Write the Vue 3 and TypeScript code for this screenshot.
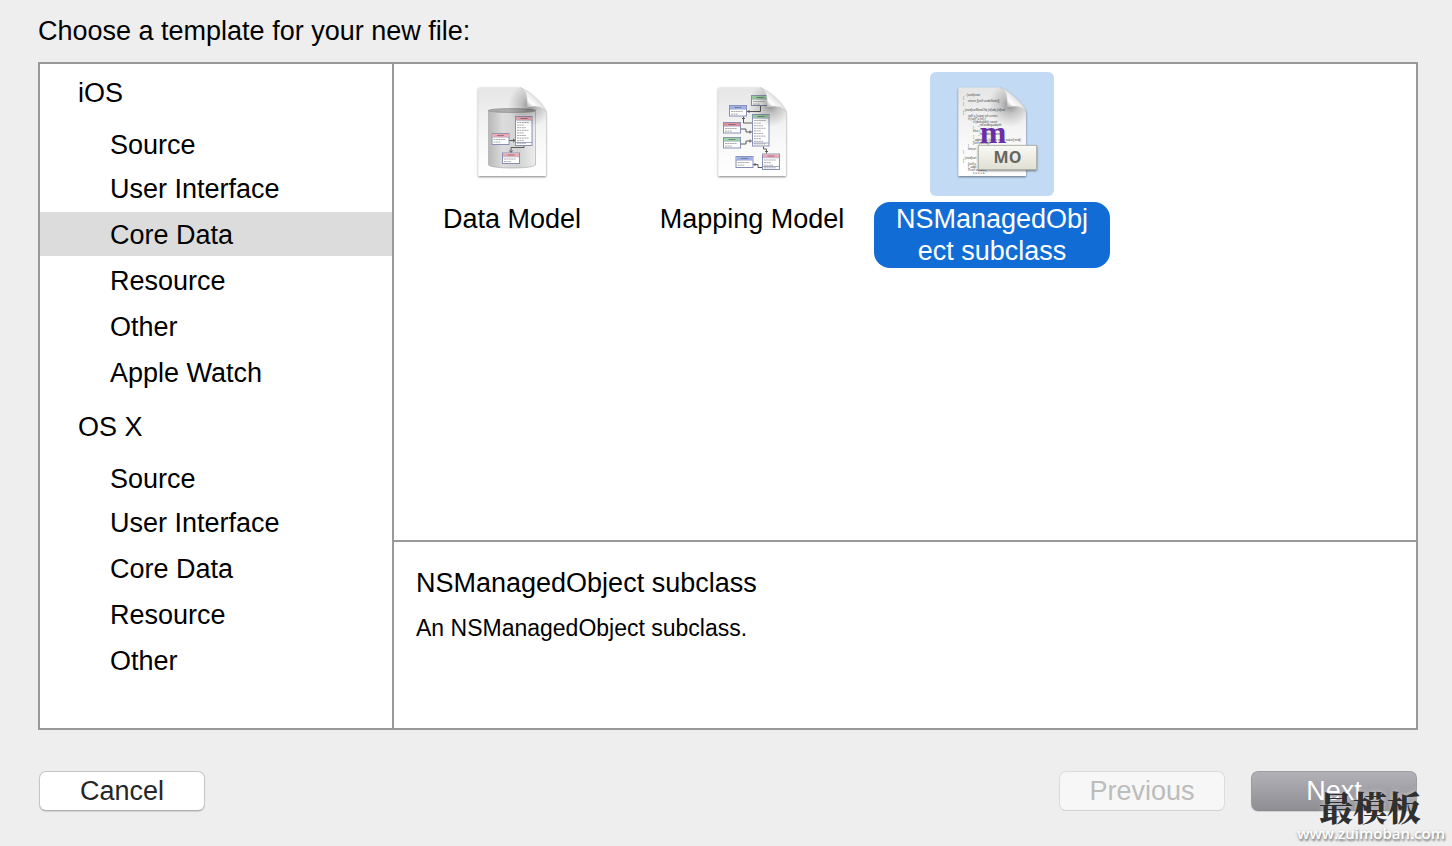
<script setup lang="ts">
import { computed, ref } from 'vue'

interface Group {
  name: string
  items: string[]
}

interface Entity {
  x: number
  y: number
  w: number
  h: number
  color: string
}

interface Template {
  id: string
  name: string
  description: string
  entities: Entity[]
  links: string[]
}

const groups: Group[] = [
  { name: 'iOS', items: ['Source', 'User Interface', 'Core Data', 'Resource', 'Other', 'Apple Watch'] },
  { name: 'OS X', items: ['Source', 'User Interface', 'Core Data', 'Resource', 'Other'] },
]

const pink = '#f0a9b3'
const green = '#9fd3a3'
const blue = '#9fb2ea'
const red = '#dc929c'

const templates: Template[] = [
  {
    id: 'model',
    name: 'Data Model',
    description: 'A Core Data model file.',
    entities: [
      { x: 42, y: 61.5, w: 17, h: 11, color: pink },
      { x: 65.5, y: 44.5, w: 16.5, h: 29, color: pink },
      { x: 52.5, y: 81, w: 17, h: 10.5, color: pink },
    ],
    links: ['M59 68.5H65M63 66.8L65 68.5L63 70.2', 'M74 74V75.5H61V80.5M59.3 78.5L61 80.5L62.7 78.5'],
  },
  {
    id: 'mapping',
    name: 'Mapping Model',
    description: 'A Core Data mapping model file.',
    entities: [
      { x: 61.5, y: 23.5, w: 16, h: 10, color: green },
      { x: 39.5, y: 33.5, w: 17, h: 10.5, color: blue },
      { x: 62.5, y: 42.5, w: 16.5, h: 31.5, color: green },
      { x: 33.5, y: 50.5, w: 17, h: 10.5, color: red },
      { x: 33.5, y: 65.5, w: 17, h: 10.5, color: green },
      { x: 46, y: 84.5, w: 17, h: 11, color: blue },
      { x: 72.5, y: 82, w: 17, h: 15.5, color: pink },
    ],
    links: [
      'M70.5 34V39.5H57M59 38V41',
      'M53.5 44.5V51H62M52 46.5H55',
      'M51 57H56V60H62M60 58.5V61.5',
      'M51 72H56V69H62M60 67.5V70.5',
      'M73.5 74.5V77H76.5V81.5M75 79.5H78',
      'M63 92.5H68V95.5H72M65 91V94',
    ],
  },
  {
    id: 'subclass',
    name: 'NSManagedObject subclass',
    description: 'An NSManagedObject subclass.',
    entities: [],
    links: [],
  },
]

const codeLines = [
  { x: 35, y: 24, text: '- (void)start' },
  { x: 33, y: 27, text: '{' },
  { x: 38, y: 30, text: 'return [[self undoState]];' },
  { x: 33, y: 33, text: '}' },
  { x: 33, y: 39, text: '- (void)setNewObj:(id)obj:(id)val' },
  { x: 33, y: 42, text: '{' },
  { x: 38, y: 45, text: 'self = [super of curves' },
  { x: 38, y: 48, text: 'if (self != nil) {' },
  { x: 43, y: 51, text: 'if (delegate) count;' },
  { x: 48, y: 54, text: '_recording=depth' },
  { x: 43, y: 57, text: '}' },
  { x: 43, y: 60, text: 'else {' },
  { x: 48, y: 63, text: '_recording=point' },
  { x: 43, y: 66, text: '}' },
  { x: 43, y: 69, text: '_address = [super order value] end];' },
  { x: 43, y: 72, text: '[self package' },
  { x: 38, y: 75, text: '}' },
  { x: 38, y: 78, text: 'return' },
  { x: 33, y: 81, text: '}' },
  { x: 33, y: 87, text: '- (void)set' },
  { x: 33, y: 90, text: '{' },
  { x: 38, y: 93, text: '[self a' },
  { x: 38, y: 96, text: '[_addr' },
  { x: 38, y: 99, text: 'if self valued {' },
  { x: 43, y: 102, text: 's = s + a' },
]

const selectedCategory = ref('iOS/Core Data')
const selectedId = ref('subclass')
const selected = computed(() => templates.find((t) => t.id === selectedId.value) ?? templates[0])

function rowCount(e: Entity): number {
  return Math.floor((e.h - 4) / 2.6)
}
</script>

<template>
  <main class="dialog">
    <h1 class="title">Choose a template for your new file:</h1>

    <div class="browser">
      <nav class="sidebar" aria-label="Template categories">
        <section v-for="group in groups" :key="group.name" class="group">
          <h2 class="group-name">{{ group.name }}</h2>
          <ul class="items">
            <li v-for="item in group.items" :key="item">
              <button
                type="button"
                class="item"
                :class="{ active: selectedCategory === group.name + '/' + item }"
                @click="selectedCategory = group.name + '/' + item"
              >{{ item }}</button>
            </li>
          </ul>
        </section>
      </nav>

      <div class="content">
        <div class="templates">
          <button
            v-for="t in templates"
            :key="t.id"
            type="button"
            class="card"
            :class="{ chosen: t.id === selectedId }"
            @click="selectedId = t.id"
          >
            <svg class="icon" viewBox="0 0 124 124" aria-hidden="true">
              <defs>
                <linearGradient :id="t.id + '-page'" x1="0" y1="0" x2="0" y2="1">
                  <stop offset="0" stop-color="#e6e6e6" />
                  <stop offset="0.6" stop-color="#f8f8f8" />
                  <stop offset="1" stop-color="#ffffff" />
                </linearGradient>
                <radialGradient :id="t.id + '-shade'" gradientUnits="userSpaceOnUse" cx="80" cy="33" r="22">
                  <stop offset="0" stop-color="#000" stop-opacity="0.4" />
                  <stop offset="0.4" stop-color="#000" stop-opacity="0.18" />
                  <stop offset="1" stop-color="#000" stop-opacity="0" />
                </radialGradient>
                <linearGradient :id="t.id + '-fold'" gradientUnits="userSpaceOnUse" x1="77" y1="35" x2="86" y2="26">
                  <stop offset="0" stop-color="#a6a6a6" />
                  <stop offset="0.45" stop-color="#ffffff" />
                  <stop offset="1" stop-color="#e2e2e2" />
                </linearGradient>
                <linearGradient :id="t.id + '-drum'" x1="0" y1="0" x2="1" y2="0">
                  <stop offset="0" stop-color="#b8b8b8" />
                  <stop offset="0.3" stop-color="#dcdcdc" />
                  <stop offset="0.65" stop-color="#d2d2d2" />
                  <stop offset="1" stop-color="#ededed" />
                </linearGradient>
                <linearGradient :id="t.id + '-badge'" x1="0" y1="0" x2="0" y2="1">
                  <stop offset="0" stop-color="#fafaf6" />
                  <stop offset="1" stop-color="#dfdfd3" />
                </linearGradient>
                <filter :id="t.id + '-soft'" x="-20%" y="-20%" width="140%" height="140%">
                  <feDropShadow dx="0" dy="1" stdDeviation="1" flood-color="#000" flood-opacity="0.5" />
                </filter>
              </defs>

              <path
                d="M28.5 15.5H70C78 18 94 32 96 40V104H28.5Z"
                :fill="'url(#' + t.id + '-page)'"
                :filter="'url(#' + t.id + '-soft)'"
              />

              <template v-if="t.id === 'model'">
                <path
                  d="M38.5 38.5V93C42 97 82 97 85.5 93V38.5Z"
                  :fill="'url(#' + t.id + '-drum)'"
                  stroke="#a4a4a4"
                  stroke-width="0.6"
                />
                <ellipse cx="62" cy="38.5" rx="23.5" ry="2" fill="#acacac" stroke="#858585" stroke-width="0.6" />
              </template>

              <path v-for="link in t.links" :key="link" :d="link" fill="none" stroke="#5a5a5a" stroke-width="1" />

              <g v-for="(e, i) in t.entities" :key="i">
                <rect :x="e.x" :y="e.y" :width="e.w" :height="e.h" fill="#fff" stroke="#8690b4" stroke-width="1" />
                <rect :x="e.x + 0.4" :y="e.y + 0.4" :width="e.w - 0.8" height="3.2" :fill="e.color" />
                <path :d="`M${e.x + 5} ${e.y + 2}h7`" stroke="#5d5560" stroke-width="1" stroke-opacity="0.6" />
                <path :d="`M${e.x} ${e.y + 3.8}h${e.w}`" stroke="#8690b4" stroke-width="0.5" />
                <path
                  v-for="n in rowCount(e)"
                  :key="n"
                  :d="`M${e.x + 1.5} ${e.y + 3.4 + n * 2.6}h${n % 3 === 1 ? 12 : n % 3 === 2 ? 7 : 9}`"
                  stroke="#888"
                  stroke-width="0.7"
                  stroke-dasharray="2 0.4"
                />
                <path
                  v-if="e.h > 15"
                  :d="`M${e.x} ${e.y + e.h - 3}h${e.w}`"
                  stroke="#8690b4"
                  stroke-width="0.8"
                />
              </g>

              <g v-if="t.id === 'subclass'" class="code">
                <text v-for="(line, i) in codeLines" :key="i" :x="line.x" :y="line.y">{{ line.text }}</text>
              </g>

              <path
                d="M50 15.5H70C77 19 77.5 24 77 35C86 33 94 35 96 40V62H50Z"
                :fill="'url(#' + t.id + '-shade)'"
              />
              <path
                d="M70 15.5C77 19 77.5 24 77 35C86 33 94 35 96 40C94 32 78 18 70 15.5Z"
                :fill="'url(#' + t.id + '-fold)'"
                stroke="#bcbcbc"
                stroke-width="0.4"
              />

              <template v-if="t.id === 'subclass'">
                <text class="letter" x="63" y="71" text-anchor="middle">m</text>
                <rect
                  x="48.5"
                  y="73.5"
                  width="58"
                  height="24"
                  :fill="'url(#' + t.id + '-badge)'"
                  stroke="#adada3"
                  stroke-width="0.8"
                  :filter="'url(#' + t.id + '-soft)'"
                />
                <text class="badge" x="77.5" y="90.5" text-anchor="middle">MO</text>
              </template>
            </svg>
            <span class="label">{{ t.name }}</span>
          </button>
        </div>

        <section class="detail" aria-live="polite">
          <h2 class="detail-name">{{ selected.name }}</h2>
          <p class="detail-text">{{ selected.description }}</p>
        </section>
      </div>
    </div>

    <footer class="actions">
      <button type="button" class="push cancel">Cancel</button>
      <button type="button" class="push" disabled>Previous</button>
      <button type="button" class="push next">Next</button>
    </footer>

    <div class="watermark">
      <span class="mark-name" lang="zh">最模板</span>
      <span class="mark-url">www.zuimoban.com</span>
    </div>
  </main>
</template>

<style>
body {
  margin: 0;
  background: #eeeeee;
}
</style>

<style scoped>
.dialog {
  box-sizing: border-box;
  position: relative;
  display: flex;
  flex-direction: column;
  min-height: 100vh;
  padding: 15px 34px 35px 38px;
  background: #eeeeee;
  color: #000;
  font-family: 'Liberation Sans', Arial, sans-serif;
  font-size: 27px;
  line-height: 32px;
}

h1,
h2,
p,
ul {
  margin: 0;
  padding: 0;
  font-size: inherit;
  font-weight: 400;
}

button {
  font: inherit;
  color: inherit;
}

.title {
  margin-bottom: 15px;
}

.browser {
  flex: 1;
  display: flex;
  border: 2px solid #999999;
  background: #fff;
}

.sidebar {
  flex: none;
  width: 352px;
  border-right: 2px solid #999999;
}

.group {
  padding-top: 6px;
}

.group + .group {
  margin-top: 4px;
}

.group-name {
  margin-bottom: 6px;
  padding-left: 38px;
  line-height: 46px;
}

.items {
  display: flex;
  flex-direction: column;
  list-style: none;
}

.items li:nth-child(n + 3) {
  margin-top: 2px;
}

.item {
  box-sizing: border-box;
  display: block;
  width: 100%;
  height: 44px;
  padding: 2px 0 0 70px;
  border: 0;
  background: none;
  text-align: left;
  line-height: 42px;
}

.item.active {
  background: #dcdcdc;
}

.content {
  flex: 1;
  display: flex;
  flex-direction: column;
  min-width: 0;
}

.templates {
  flex: 1;
  display: flex;
  flex-wrap: wrap;
  align-content: flex-start;
  gap: 4px;
  padding-top: 8px;
}

.card {
  display: flex;
  flex-direction: column;
  align-items: center;
  gap: 6px;
  width: 236px;
  padding: 0;
  border: 0;
  background: none;
}

.icon {
  width: 124px;
  height: 124px;
  border-radius: 6px;
}

.chosen .icon {
  background: #c3daf5;
}

.label {
  box-sizing: border-box;
  width: 100%;
  padding: 1px 20px;
  border-radius: 16px;
  overflow-wrap: anywhere;
}

.chosen .label {
  background: #116cd6;
  color: #fff;
  word-break: break-all;
}

.code text {
  fill: #444;
  font-family: 'Liberation Sans', Arial, sans-serif;
  font-size: 3px;
}

.letter {
  fill: #6a2fa8;
  font-family: 'Liberation Serif', 'Times New Roman', serif;
  font-size: 32px;
  font-weight: 700;
}

.badge {
  fill: #66665f;
  font-family: 'Open Sans', sans-serif;
  font-size: 16px;
  font-weight: 700;
}

.detail {
  box-sizing: border-box;
  min-height: 188px;
  padding: 25px 22px;
  border-top: 2px solid #999999;
}

.detail-name {
  margin-bottom: 13px;
}

.detail-text {
  font-size: 23px;
}

.actions {
  display: flex;
  gap: 26px;
  margin-top: 41px;
  padding: 0 1px;
}

.push {
  box-sizing: border-box;
  width: 166px;
  height: 40px;
  padding: 0;
  border: 1px solid #c6c6c6;
  border-bottom-color: #b0b0b0;
  border-radius: 7px;
  background: #fff;
  box-shadow: 0 1px 1px rgba(0, 0, 0, 0.12);
  color: #262626;
}

.push:disabled {
  border-color: #dcdcdc;
  border-bottom-color: #d0d0d0;
  background: #f7f7f7;
  box-shadow: none;
  color: #bcbcbc;
}

.cancel {
  margin-right: auto;
}

.next {
  border-color: #9d9ca2;
  border-bottom-color: #88878c;
  background: linear-gradient(#b2b1b7, #8f8e93);
  color: #fff;
}

.watermark {
  position: absolute;
  right: 7px;
  bottom: 4px;
  display: flex;
  flex-direction: column;
  align-items: flex-end;
  pointer-events: none;
}

.mark-name {
  margin-right: 24px;
  color: #303030;
  font-family: 'Noto Serif CJK SC', 'Noto Sans CJK SC', serif;
  font-size: 34px;
  font-weight: 900;
  line-height: 34px;
  text-shadow: 0 0 5px rgba(255, 255, 255, 0.6);
}

.mark-url {
  color: #fff;
  font-family: 'Open Sans', sans-serif;
  font-size: 15px;
  font-weight: 600;
  line-height: 18px;
  text-shadow: 1px 2px 2px #888, 0 1px 3px #aaa;
}
</style>
